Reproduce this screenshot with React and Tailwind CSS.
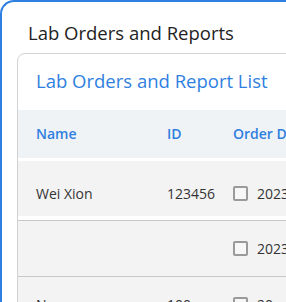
const rows = [
  { name: 'Wei Xion', id: '123456', date: '2023' },
  { name: '', id: '', date: '2023' },
  { name: 'N', id: '100', date: '20' },
];

export default function App() {
  return (
    <div className="w-[286px] h-[302px] overflow-hidden bg-white" style={{ fontFamily: "'Open Sans', 'Noto Sans', sans-serif" }}>
      <div className="w-[340px] h-[340px] border-t-2 border-l-2 border-[#2f7fe0] rounded-tl-[14px] pt-[18px]">
        <h1 className="pl-[26px] text-[18.5px] leading-[25px] text-[#222]">Lab Orders and Reports</h1>
        <div className="ml-[15px] mt-[8px] border border-[#d2d2d2] rounded-tl-[8px] bg-white">
          <div className="h-[56px] pl-[18px] pb-[2px] flex items-center text-[18.5px] text-[#2f7fe0] whitespace-nowrap">Lab Orders and Report List</div>
          <div className="h-[48px] bg-[#f0f3f6] flex items-center pl-[18px] pb-[1px] text-[14px] font-semibold text-[#2f7fe0]">
            <span className="w-[131px]">Name</span>
            <span className="w-[66px]">ID</span>
            <span className="whitespace-nowrap">Order Date</span>
          </div>
          <div className="h-[3px]" />
          {rows.map((r, i) => (
            <div key={i} className={i === 0 ? 'pb-[4px] bg-white' : 'border-t border-[#c8c8c8]'}>
              <div className={`bg-[#f3f3f3] h-[55px] flex items-center pl-[18px] text-[14px] text-[#333] whitespace-nowrap ${i === 0 ? 'pt-[9px]' : ''}`}>
                <span className="w-[131px]">{r.name}</span>
                <span className="w-[66px]">{r.id}</span>
                <span className="w-[15px] h-[15px] border-2 border-[#9a9a9a] rounded-[2px] bg-[#f7f7f7] mr-[9px] shrink-0" />
                <span>{r.date}</span>
              </div>
            </div>
          ))}
        </div>
      </div>
    </div>
  );
}
